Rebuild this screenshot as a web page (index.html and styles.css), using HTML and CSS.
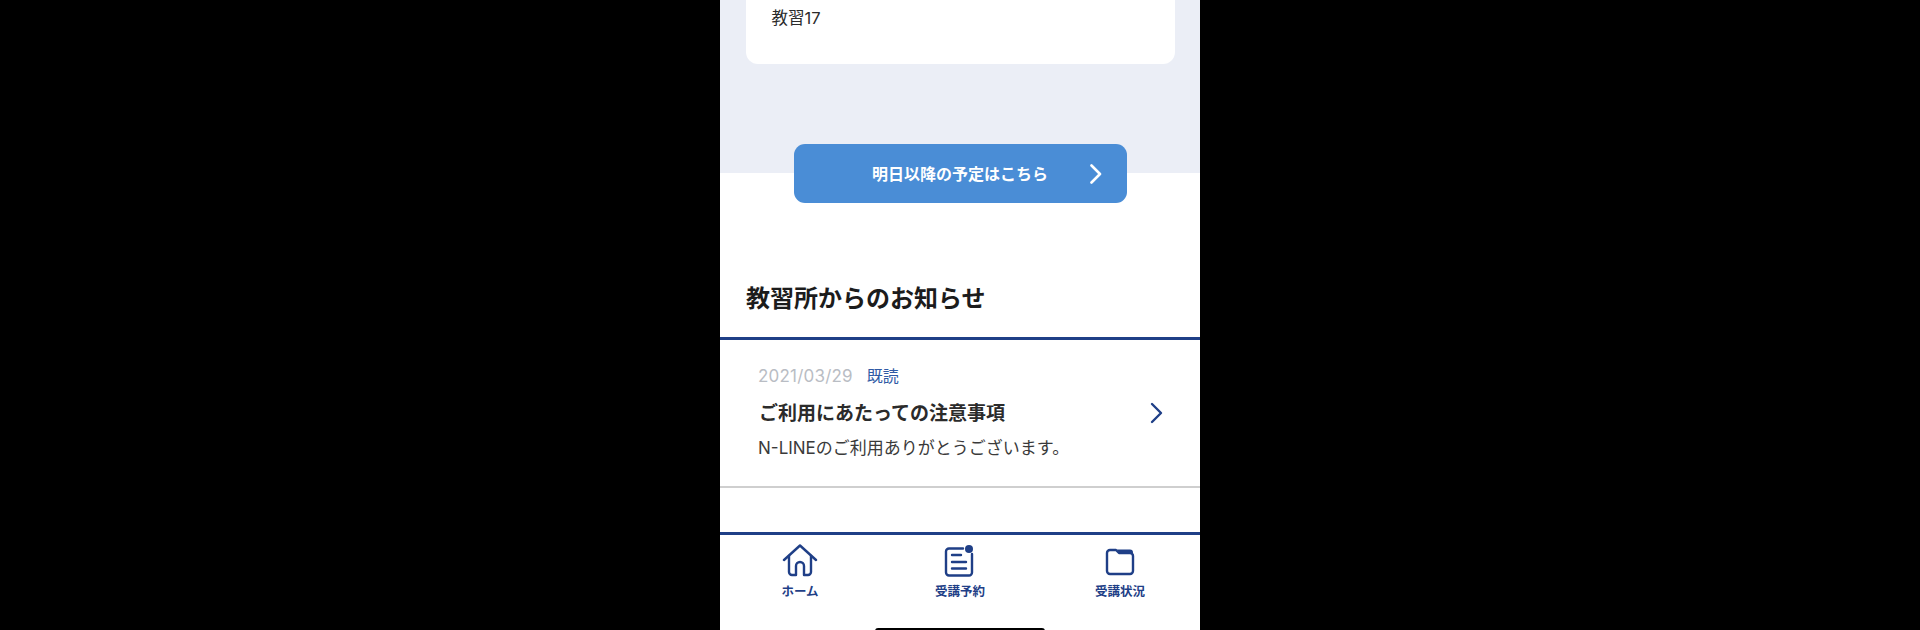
FILE: index.html
```html
<!DOCTYPE html>
<html lang="ja">

<head>
	<meta charset="UTF-8">
	<title>N-LINE</title>
	<link rel="stylesheet" href="styles.css">
</head>

<body>
	<div class="phone">
		<section class="today">
			<div class="card">
				<p class="card-name">教習17</p>
			</div>
		</section>

		<a class="future-btn">
			<span>明日以降の予定はこちら</span>
			<svg class="future-arrow" viewBox="0 0 14 20" width="14" height="20">
				<path d="M2.5 1.5 L11 10 L2.5 18.5" />
			</svg>
		</a>

		<h2 class="news-title">教習所からのお知らせ</h2>

		<article class="news-item">
			<div class="news-body">
				<div class="news-meta">
					<span class="news-date">2021/03/29</span>
					<span class="news-read">既読</span>
				</div>
				<h3>ご利用にあたっての注意事項</h3>
				<p>N-LINEのご利用ありがとうございます。</p>
			</div>
			<svg class="news-arrow" viewBox="0 0 14 22" width="14" height="22">
				<path d="M2 2 L11 11 L2 20" />
			</svg>
		</article>

		<nav class="tabbar">
			<div class="tabs">
				<a class="tab">
					<svg viewBox="0 0 36 34" width="36" height="34">
						<path d="M2 16 L18 1.5 L34 16" />
						<path d="M7 12 V28 a3 3 0 0 0 3 3 H14 V22 a4 4 0 0 1 8 0 V31 H26 a3 3 0 0 0 3 -3 V12" />
					</svg>
					<span>ホーム</span>
				</a>
				<a class="tab">
					<svg viewBox="0 0 32 34" width="32" height="34">
						<path d="M19 4.5 H5 a3 3 0 0 0 -3 3 V28.500 a3 3 0 0 0 3 3 H25 a3 3 0 0 0 3 -3 V10" />
						<path d="M8 11 H17 M8 18 H22 M8 24.500 H22" />
						<circle class="tab-dot" cx="25" cy="5" r="4" />
					</svg>
					<span>受講予約</span>
				</a>
				<a class="tab">
					<svg viewBox="0 0 32 34" width="32" height="34">
						<path d="M6 6 H12 L15 9 H26 a3 3 0 0 1 3 3 V27 a3 3 0 0 1 -3 3 H6 a3 3 0 0 1 -3 -3 V9 a3 3 0 0 1 3 -3 Z" />
						<path class="tab-fill" d="M13 5.500 H26 a3 3 0 0 1 3 3 V10 H16 Z" />
					</svg>
					<span>受講状況</span>
				</a>
			</div>
			<div class="home-bar"></div>
		</nav>
	</div>
</body>

</html>
```

FILE: styles.css
```css
body {
	background-color: #000;
	margin: 0;
	padding: 0;
	font-family: Inter, "Noto Sans CJK JP", "Noto Sans", sans-serif;
}

.phone {
	width: 480px;
	height: 630px;
	margin: 0 auto;
	background-color: #fff;
	color: #2b2b2b;
	overflow: hidden;
	display: flex;
	flex-direction: column;
}

.today {
	height: 173px;
	flex-shrink: 0;
	padding: 0 25.5px;
	box-sizing: border-box;
	background-color: #ebeef6;
}

.card {
	height: 64px;
	padding-left: 26px;
	background-color: #fff;
	border-radius: 0 0 12px 12px;
}

.card-name {
	margin: 0;
	font-size: 16.5px;
	line-height: 36px;
}

.future-btn {
	position: relative;
	width: 333px;
	height: 59px;
	flex-shrink: 0;
	margin: -29px auto 0;
	padding-bottom: 2px;
	box-sizing: border-box;
	display: flex;
	align-items: center;
	justify-content: center;
	background-color: #4a8dd6;
	border-radius: 11px;
	color: #fff;
	font-size: 16px;
	font-weight: 700;
}

.future-arrow {
	position: absolute;
	right: 24px;
	top: 20px;
}

.future-arrow path {
	fill: none;
	stroke: #fff;
	stroke-width: 2.6;
	stroke-linecap: round;
	stroke-linejoin: round;
}

.news-title {
	margin: 76px 0 0 26px;
	font-size: 24px;
	font-weight: 700;
	line-height: 40px;
	color: #1c1c1c;
}

.news-item {
	margin-top: 18px;
	height: 151px;
	flex-shrink: 0;
	box-sizing: border-box;
	padding: 0 36px 2px 38px;
	border-top: 3px solid #1f3f87;
	border-bottom: 2px solid #cfcfcf;
	display: flex;
	align-items: center;
	justify-content: space-between;
}

.news-meta {
	display: flex;
	gap: 14px;
	font-size: 16px;
	line-height: 24px;
}

.news-date {
	color: #b9bdc4;
	font-size: 17px;
	letter-spacing: 0.2px;
}

.news-read {
	color: #2f5aa5;
}

.news-item h3 {
	margin: 12px 0 0 1px;
	font-size: 19px;
	font-weight: 700;
	line-height: 28px;
}

.news-item p {
	margin: 8px 0 0;
	font-size: 17px;
	line-height: 24px;
	color: #3a3a3a;
}

.news-arrow {
	margin-top: 2px;
}

.news-arrow path {
	fill: none;
	stroke: #1f3f87;
	stroke-width: 2.4;
	stroke-linecap: round;
	stroke-linejoin: round;
}

.tabbar {
	margin-top: 44px;
	flex-grow: 1;
	border-top: 3px solid #1f3f87;
	display: flex;
	flex-direction: column;
}

.tabs {
	display: grid;
	grid-template-columns: repeat(3, 1fr);
	padding-top: 9px;
}

.tab {
	display: flex;
	flex-direction: column;
	align-items: center;
	color: #1f3f87;
	font-size: 12.5px;
	font-weight: 700;
	line-height: 18px;
}

.tab svg {
	margin-bottom: 5px;
}

.tab path {
	fill: none;
	stroke: #1f3f87;
	stroke-width: 2.4;
	stroke-linecap: round;
	stroke-linejoin: round;
}

.tab .tab-fill {
	fill: #1f3f87;
	stroke: none;
}

.tab-dot {
	fill: #1f3f87;
}

.home-bar {
	width: 170px;
	height: 6px;
	margin: auto auto -4px;
	background-color: #000;
	border-radius: 3px;
}
```
